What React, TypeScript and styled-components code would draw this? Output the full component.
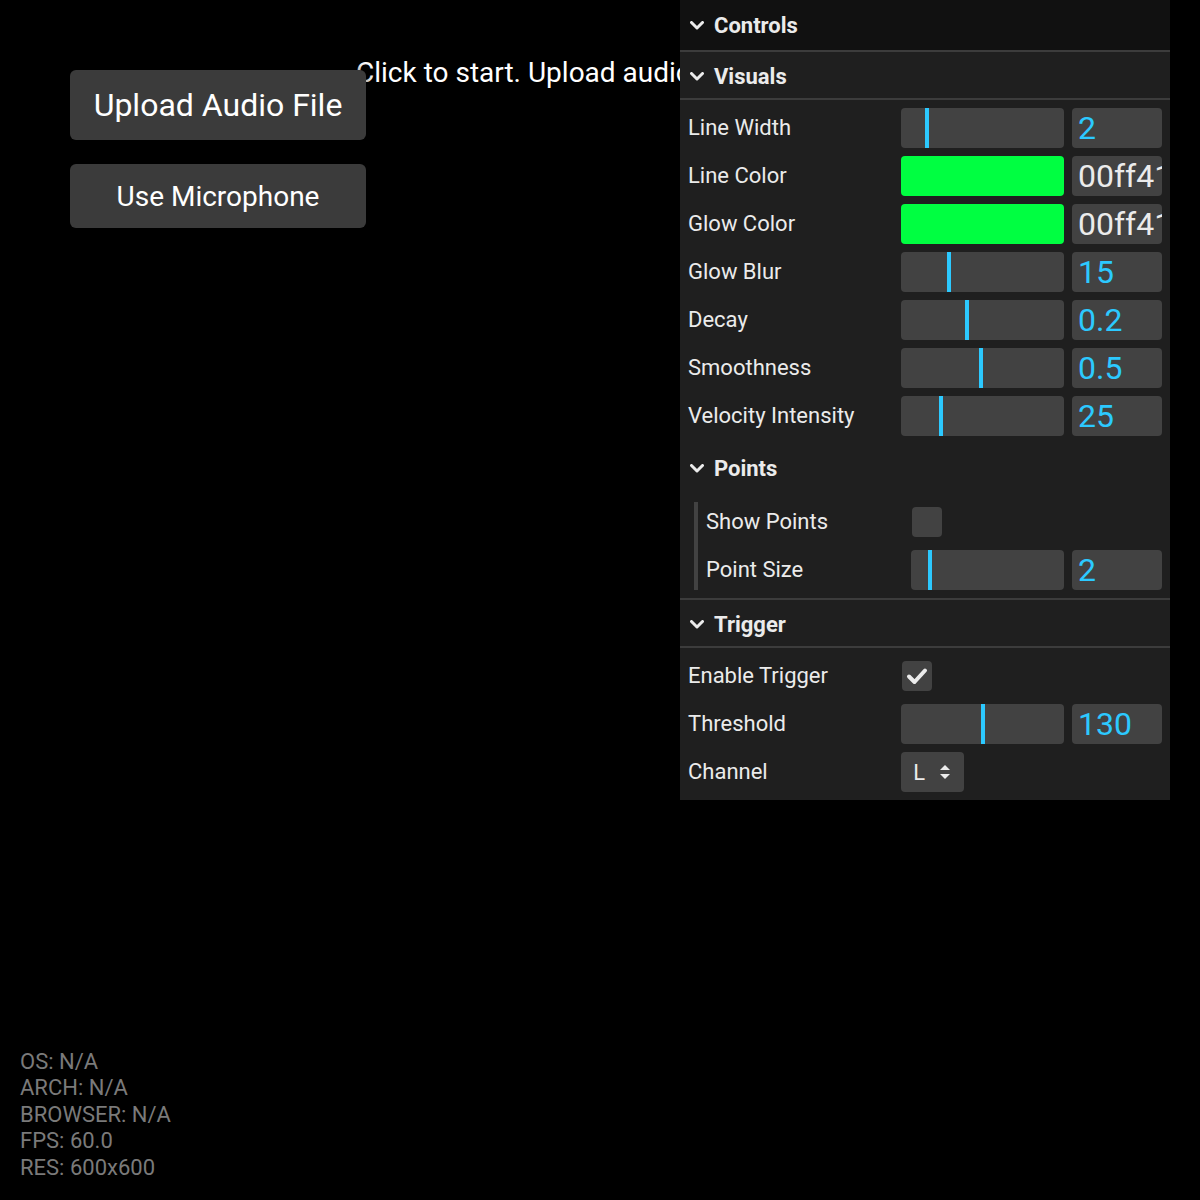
import styled, { createGlobalStyle } from 'styled-components'

const GlobalStyle = createGlobalStyle`
  html, body {
    margin: 0;
    padding: 0;
    background: #000;
  }
  body {
    font-family: Roboto, 'Noto Sans', sans-serif;
  }
  * {
    box-sizing: border-box;
  }
`

const Stage = styled.div`
  position: relative;
  width: 1200px;
  height: 1200px;
  background: #000;
  overflow: hidden;
`

// canvas caption, partly hidden behind the gui panel
const StatusText = styled.div`
  position: absolute;
  top: 54px;
  left: 356px;
  width: 324px;
  overflow: hidden;
  color: #fff;
  font-size: 28px;
  line-height: 38px;
  white-space: nowrap;
`

const SourceButtons = styled.div`
  position: absolute;
  top: 70px;
  left: 70px;
  display: flex;
  flex-direction: column;
  gap: 24px;
  width: 296px;
`

const SourceButton = styled.button<{ $big?: boolean }>`
  height: ${({ $big }) => ($big ? '70px' : '64px')};
  width: 100%;
  border: none;
  border-radius: 6px;
  background: #3b3b3b;
  color: #fff;
  font-family: Roboto, sans-serif;
  font-size: ${({ $big }) => ($big ? '32px' : '28px')};
  box-shadow: 0 0 12px rgba(0, 0, 0, 0.6);
  cursor: pointer;
`

const Info = styled.div`
  position: absolute;
  left: 20px;
  bottom: 19px;
  color: #7a7a7a;
  font-size: 22px;
  line-height: 26.5px;
`

const Panel = styled.div`
  position: absolute;
  top: 0;
  right: 30px;
  width: 490px;
  background: #1f1f1f;
  color: #ebebeb;
  font-family: Roboto, sans-serif;
  font-size: 22px;
`

const Title = styled.div<{ $kind: 'root' | 'folder' | 'nested' }>`
  display: flex;
  align-items: center;
  gap: 10px;
  height: 50px;
  padding: 0 10px;
  font-weight: 700;
  background: ${({ $kind }) => ($kind === 'root' ? '#111111' : 'transparent')};
  border-top: ${({ $kind }) => ($kind === 'folder' ? '2px solid #3c3c3c' : 'none')};
  border-bottom: ${({ $kind }) => ($kind === 'folder' ? '2px solid #3c3c3c' : 'none')};
  padding-top: ${({ $kind }) => ($kind === 'folder' ? '2px' : '0')};
  padding-bottom: ${({ $kind }) => ($kind === 'nested' ? '2px' : '0')};

  svg {
    flex-shrink: 0;
  }
`

const Children = styled.div<{ $nested?: boolean }>`
  margin-left: ${({ $nested }) => ($nested ? '14px' : '0')};
  border-left: ${({ $nested }) => ($nested ? '4px solid #424242' : 'none')};
`

const Row = styled.div`
  display: flex;
  align-items: center;
  height: 40px;
  margin: 8px 0;
  padding: 0 8px;
`

const Name = styled.div`
  min-width: 45%;
  flex-shrink: 0;
  padding-right: 8px;
  white-space: pre;
  line-height: 38px;
`

const Widget = styled.div`
  flex: 1;
  display: flex;
  align-items: center;
  gap: 8px;
  height: 40px;
`

const Slider = styled.div`
  flex: 1;
  height: 40px;
  background: #424242;
  border-radius: 4px;
  padding-right: 4px;
  overflow: hidden;
`

const Fill = styled.div`
  height: 100%;
  border-right: 4px solid #2cc9ff;
  box-sizing: content-box;
`

const Field = styled.input<{ $number?: boolean }>`
  width: 27%;
  min-width: 90px;
  height: 40px;
  flex-shrink: 0;
  border: none;
  outline: none;
  border-radius: 4px;
  background: #424242;
  color: ${({ $number }) => ($number ? '#2cc9ff' : '#ebebeb')};
  font-family: Roboto, sans-serif;
  font-size: 32px;
  padding: 0 0 0 6px;
  margin: 0;
`

const Swatch = styled.div<{ $color: string }>`
  flex: 1;
  height: 40px;
  border-radius: 4px;
  background: ${({ $color }) => $color};
`

const Check = styled.div`
  width: 30px;
  height: 30px;
  margin-left: 1px;
  border-radius: 4px;
  background: #424242;
  display: flex;
  align-items: center;
  justify-content: center;
`

const Select = styled.div`
  display: flex;
  align-items: center;
  gap: 14px;
  height: 40px;
  padding: 0 13px 0 12px;
  border-radius: 4px;
  background: #424242;
  font-size: 22px;
`

const Chevron = () => (
  <svg width="14" height="9" viewBox="0 0 14 9">
    <path d="M1.5 1.5 L7 7 L12.5 1.5" fill="none" stroke="#ebebeb" strokeWidth="3" strokeLinecap="round" strokeLinejoin="round" />
  </svg>
)

const Tick = () => (
  <svg width="22" height="18" viewBox="0 0 22 18">
    <path d="M3 9.5 L8.5 15 L19 3.5" fill="none" stroke="#ebebeb" strokeWidth="4" strokeLinecap="round" strokeLinejoin="round" />
  </svg>
)

const UpDown = () => (
  <svg width="12" height="16" viewBox="0 0 12 16">
    <path d="M6 1 L11 6 L1 6 Z" fill="#ebebeb" />
    <path d="M6 15 L11 10 L1 10 Z" fill="#ebebeb" />
  </svg>
)

function NumberRow(props: { name: string; value: string; fill: number }) {
  return (
    <Row>
      <Name>{props.name}</Name>
      <Widget>
        <Slider>
          <Fill style={{ width: `${props.fill}%` }} />
        </Slider>
        <Field $number readOnly value={props.value} />
      </Widget>
    </Row>
  )
}

function ColorRow(props: { name: string; color: string }) {
  return (
    <Row>
      <Name>{props.name}</Name>
      <Widget>
        <Swatch $color={props.color} />
        <Field readOnly value={props.color.replace('#', '')} />
      </Widget>
    </Row>
  )
}

function CheckRow(props: { name: string; checked?: boolean }) {
  return (
    <Row>
      <Name>{props.name}</Name>
      <Widget>
        <Check>{props.checked && <Tick />}</Check>
      </Widget>
    </Row>
  )
}

export default function App() {
  return (
    <>
      <GlobalStyle />
      <Stage>
        <StatusText>Click to start. Upload audio file or use microphone.</StatusText>

        <SourceButtons>
          <SourceButton $big>Upload Audio File</SourceButton>
          <SourceButton>Use Microphone</SourceButton>
        </SourceButtons>

        <Info>
          <div>OS: N/A</div>
          <div>ARCH: N/A</div>
          <div>BROWSER: N/A</div>
          <div>FPS: 60.0</div>
          <div>RES: 600x600</div>
        </Info>

        <Panel>
          <Title $kind="root">
            <Chevron />
            Controls
          </Title>
          <Children>
            <Title $kind="folder">
              <Chevron />
              Visuals
            </Title>
            <Children>
              <NumberRow name="Line Width" value="2" fill={15} />
              <ColorRow name="Line Color" color="#00ff41" />
              <ColorRow name="Glow Color" color="#00ff41" />
              <NumberRow name="Glow Blur" value="15" fill={29} />
              <NumberRow name="Decay" value="0.2" fill={40} />
              <NumberRow name="Smoothness" value="0.5" fill={49} />
              <NumberRow name="Velocity Intensity" value="25" fill={24} />
              <Title $kind="nested">
                <Chevron />
                Points
              </Title>
              <Children $nested>
                <CheckRow name="Show Points" />
                <NumberRow name="Point Size" value="2" fill={11} />
              </Children>
            </Children>
            <Title $kind="folder">
              <Chevron />
              Trigger
            </Title>
            <Children>
              <CheckRow name="Enable Trigger" checked />
              <NumberRow name="Threshold" value="130" fill={50} />
              <Row>
                <Name>Channel</Name>
                <Widget>
                  <Select>
                    L
                    <UpDown />
                  </Select>
                </Widget>
              </Row>
            </Children>
          </Children>
        </Panel>
      </Stage>
    </>
  )
}
